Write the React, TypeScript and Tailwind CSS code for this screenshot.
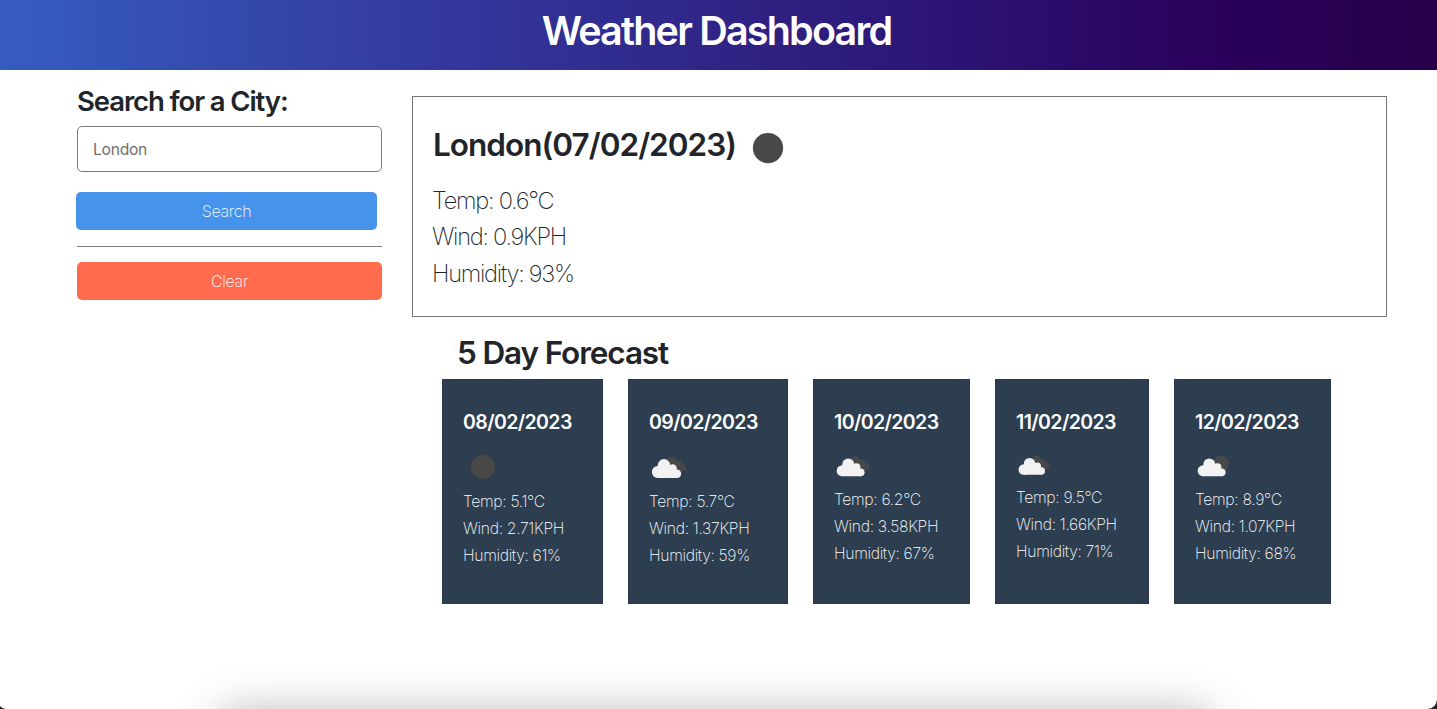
type IconKind = "clear" | "broken" | "few";

interface Day {
  date: string;
  icon: IconKind;
  temp: string;
  wind: string;
  humidity: string;
  width: string;
  iconBox: string;
}

const days: Day[] = [
  { date: "08/02/2023", icon: "clear", temp: "5.1°C", wind: "2.71KPH", humidity: "61%", width: "w-[161px]", iconBox: "size-[40px]" },
  { date: "09/02/2023", icon: "broken", temp: "5.7°C", wind: "1.37KPH", humidity: "59%", width: "w-[160px]", iconBox: "size-[40px]" },
  { date: "10/02/2023", icon: "broken", temp: "6.2°C", wind: "3.58KPH", humidity: "67%", width: "w-[157px]", iconBox: "size-[38px]" },
  { date: "11/02/2023", icon: "broken", temp: "9.5°C", wind: "1.66KPH", humidity: "71%", width: "w-[154px]", iconBox: "size-[36px]" },
  { date: "12/02/2023", icon: "few", temp: "8.9°C", wind: "1.07KPH", humidity: "68%", width: "w-[157px]", iconBox: "size-[38px]" },
];

function WeatherIcon({ kind, className }: { kind: IconKind; className: string }) {
  return (
    <svg viewBox="0 0 40 40" className={className} aria-hidden="true">
      {kind === "clear" && <circle cx="20" cy="20" r="12.1" fill="#484848" />}
      {kind === "broken" && (
        <g fill="#484848">
          <circle cx="22.8" cy="14.5" r="5" />
          <circle cx="29" cy="17.4" r="4" />
          <circle cx="33.2" cy="20.6" r="3.8" />
          <path d="M22 15h7l4 5v4.4h-8z" />
        </g>
      )}
      {kind === "few" && <circle cx="27.2" cy="17.8" r="8.6" fill="#484848" />}
      {kind !== "clear" && (
        <g fill="#f2f2f2">
          <circle cx="8.7" cy="25" r="5.9" />
          <circle cx="15" cy="18.4" r="6.3" />
          <circle cx="23.6" cy="21.4" r="4.2" />
          <circle cx="28" cy="26.7" r="4.2" />
          <path d="M8.7 20h15L28 23.5v7.4H8.7z" />
        </g>
      )}
    </svg>
  );
}

function ForecastCard({ day }: { day: Day }) {
  return (
    <article
      className={`h-[225px] shrink-0 border border-[#28384a] bg-[#2c3e50] pl-5 pt-[30px] text-white ${day.width}`}
    >
      <h3 className="text-[19.5px] font-semibold leading-6 tracking-[-0.6px]">{day.date}</h3>
      <WeatherIcon kind={day.icon} className={`mt-[13px] block ${day.iconBox}`} />
      <div className="mt-px whitespace-nowrap text-[15.7px] font-[230] leading-[27.2px] tracking-[-0.31px]">
        <p>Temp: {day.temp}</p>
        <p>Wind: {day.wind}</p>
        <p>Humidity: {day.humidity}</p>
      </div>
    </article>
  );
}

export default function App() {
  return (
    <div className="relative h-[709px] w-[1437px] overflow-hidden bg-white font-['Inter',sans-serif] text-[#212529]">
      <header className="flex h-[70px] justify-center bg-[linear-gradient(90deg,#365cc0_0%,#343ba0_28%,#2c1676_64%,#2a005c_85%,#28004a_100%)] pr-1 pt-[7px]">
        <h1 className="whitespace-nowrap text-[39.5px] font-[570] leading-[48px] tracking-[-1.8px] text-white">
          Weather Dashboard
        </h1>
      </header>

      <div className="flex">
        <aside className="ml-[77px] w-[305px] shrink-0 pt-[14px]">
          <h2 className="whitespace-nowrap text-[27.5px] font-[570] leading-[34px] tracking-[-1.1px]">
            Search for a City:
          </h2>
          <input
            type="text"
            placeholder="London"
            className="mt-[8px] block h-[46px] w-full rounded-[5px] border border-[#7b7b7b] px-[15px] text-[15.7px] tracking-[-0.3px] placeholder:text-[#707070]"
          />
          <button className="-ml-px mt-5 block h-[38px] w-[301px] rounded-[5px] bg-[#4593ea] text-base font-[250] tracking-[-0.3px] text-white">
            Search
          </button>
          <hr className="mt-4 border-t border-[#7f7f7f]" />
          <button className="mt-[15px] block h-[38px] w-full rounded-[5px] bg-[#ff6b4d] text-base font-[250] tracking-[-0.3px] text-white">
            Clear
          </button>
        </aside>

        <main className="ml-[30px] w-[975px] shrink-0 pt-[26px]">
          <section className="h-[221px] border border-[#757575] pl-5 pt-[22px]">
            <div className="flex h-[56px] items-center">
              <h2 className="mb-[5px] w-[310px] whitespace-nowrap text-[31.5px] font-[570] leading-[38px] tracking-[-0.97px]">
                London(07/02/2023)
              </h2>
              <WeatherIcon kind="clear" className="mt-[2px] size-[50px]" />
            </div>
            <div className="-ml-px mt-2 text-[23.6px] font-[150] leading-[36.4px] tracking-[-1.25px]">
              <p>Temp: 0.6°C</p>
              <p>Wind: 0.9KPH</p>
              <p>Humidity: 93%</p>
            </div>
          </section>

          <h2 className="ml-[45px] mt-[17px] whitespace-nowrap text-[31.5px] font-[570] leading-[38px] tracking-[-1.13px]">
            5 Day Forecast
          </h2>
          <section className="ml-[30px] mt-[7px] flex gap-[25px]">
            {days.map((day) => (
              <ForecastCard key={day.date} day={day} />
            ))}
          </section>
        </main>
      </div>

      <div className="absolute left-[219px] top-[718px] h-10 w-[992px] rounded-[24px] shadow-[0_0_46px_3px_rgba(0,0,0,0.34)]" />
      <svg viewBox="0 0 10 10" className="absolute bottom-0 right-0 size-[10px]" aria-hidden="true">
        <path d="M10 0Q9.5 9.5 0 10H10z" fill="#222226" />
      </svg>
      <svg viewBox="0 0 7 3" className="absolute bottom-0 left-0 h-[3px] w-[7px]" aria-hidden="true">
        <path d="M0 0Q2 2.5 7 3H0z" fill="#222226" />
      </svg>
    </div>
  );
}
